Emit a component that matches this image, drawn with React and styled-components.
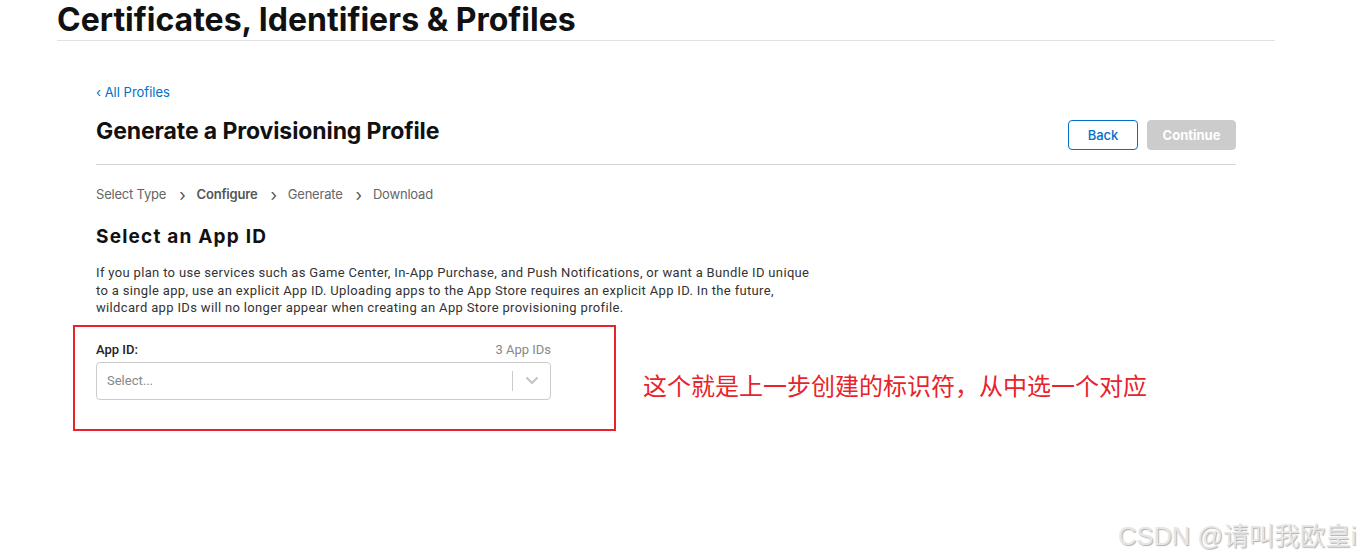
import React from "react";
import styled, { createGlobalStyle } from "styled-components";

const GlobalStyle = createGlobalStyle`
  html, body {
    margin: 0;
    padding: 0;
    background: #fff;
  }
  body {
    font-family: Inter, "Noto Sans", sans-serif;
    color: #111;
    width: 1361px;
    height: 559px;
    overflow: hidden;
  }
`;

const Page = styled.div`
  position: relative;
  width: 1361px;
  height: 559px;
`;

const Header = styled.header`
  margin-left: 57px;
  width: 1218px;
  border-bottom: 1px solid #e2e2e2;
  height: 40px;
  h1 {
    margin: 0;
    font-size: 32px;
    font-weight: 700;
    line-height: 40px;
    color: #111;
  }
`;

const Content = styled.main`
  margin-left: 96px;
  width: 1140px;
  padding-top: 43px;
`;

const BackLink = styled.a`
  display: block;
  color: #0070c9;
  font-size: 13px;
  line-height: 16px;
  text-decoration: none;
  font-family: Inter, sans-serif;
`;

const TitleRow = styled.div`
  display: flex;
  justify-content: space-between;
  align-items: flex-end;
  margin-top: 17px;
  padding-bottom: 14px;
  border-bottom: 1px solid #d6d6d6;
  h2 {
    margin: 0 0 5px;
    font-size: 23px;
    font-weight: 700;
    line-height: 28px;
    letter-spacing: -0.1px;
    color: #111;
  }
`;

const Buttons = styled.div`
  display: flex;
  gap: 9px;
`;

const Button = styled.button`
  height: 30px;
  border-radius: 4px;
  font-family: Inter, sans-serif;
  font-size: 13px;
  padding: 0;
  width: ${(p) => (p.$primary ? "89px" : "70px")};
  border: 1px solid ${(p) => (p.$primary ? "#cccccc" : "#0070c9")};
  background: ${(p) => (p.$primary ? "#cccccc" : "#fff")};
  color: ${(p) => (p.$primary ? "#fff" : "#0070c9")};
  font-weight: ${(p) => (p.$primary ? 700 : 500)};
`;

const Steps = styled.ol`
  display: flex;
  align-items: center;
  list-style: none;
  margin: 19px 0 0;
  padding: 0;
  font-family: Inter, sans-serif;
  font-size: 13px;
  line-height: 18px;
  color: #666;
`;

const Step = styled.li`
  display: flex;
  align-items: center;
  font-weight: ${(p) => (p.$active ? 600 : 400)};
  color: ${(p) => (p.$active ? "#555" : "#666")};
  letter-spacing: -0.2px;
  &:not(:last-child)::after {
    content: "›";
    font-weight: 400;
    font-size: 17px;
    margin: 2px 11px 0 13px;
    color: #555;
  }
`;

const Section = styled.section`
  margin-top: 21px;
  h3 {
    margin: 0;
    font-family: Inter, sans-serif;
    font-size: 19px;
    font-weight: 700;
    line-height: 24px;
    letter-spacing: 1.2px;
    color: #111;
  }
  p {
    margin: 15px 0 0;
    width: 716px;
    font-family: Roboto, sans-serif;
    font-size: 13px;
    line-height: 17.5px;
    letter-spacing: 0.34px;
    color: #333;
  }
`;

const Annotated = styled.div`
  display: flex;
  align-items: center;
  margin: 8px 0 0 -23px;
`;

const RedBox = styled.div`
  width: 518px;
  height: 77px;
  border: 2px solid #e8232b;
  padding: 15px 0 10px 21px;
`;

const FieldHead = styled.div`
  display: flex;
  justify-content: space-between;
  width: 455px;
  font-family: Roboto, sans-serif;
  font-size: 13px;
  line-height: 16px;
  label {
    color: #222;
    font-weight: 500;
  }
  span {
    color: #888;
  }
`;

const SelectBox = styled.div`
  margin-top: 4px;
  width: 453px;
  height: 36px;
  border: 1px solid #ccc;
  border-radius: 4px;
  display: flex;
  align-items: center;
  font-family: Roboto, sans-serif;
  font-size: 13px;
  color: #888;
`;

const Placeholder = styled.span`
  flex: 1;
  padding-left: 10px;
`;

const Sep = styled.span`
  width: 1px;
  height: 20px;
  background: #ccc;
`;

const Chevron = styled.span`
  width: 37px;
  display: flex;
  justify-content: center;
  align-items: center;
`;

const Note = styled.div`
  margin-left: 27px;
  margin-top: 14px;
  font-family: "Microsoft YaHei", "Noto Sans CJK SC", sans-serif;
  font-size: 24px;
  color: #e8232b;
  white-space: nowrap;
`;

const Watermark = styled.div`
  position: absolute;
  left: 1118px;
  top: 515px;
  font-family: "Liberation Sans", "Noto Sans CJK SC", sans-serif;
  font-size: 25.5px;
  color: #e6e6e6;
  text-shadow: 1px 1px 1px #b0b0b0;
  white-space: nowrap;
`;

export default function App() {
  return (
    <Page>
      <GlobalStyle />
      <Header>
        <h1>Certificates, Identifiers &amp; Profiles</h1>
      </Header>
      <Content>
        <BackLink href="#">‹ All Profiles</BackLink>
        <TitleRow>
          <h2>Generate a Provisioning Profile</h2>
          <Buttons>
            <Button>Back</Button>
            <Button $primary>Continue</Button>
          </Buttons>
        </TitleRow>
        <Steps>
          <Step>Select Type</Step>
          <Step $active>Configure</Step>
          <Step>Generate</Step>
          <Step>Download</Step>
        </Steps>
        <Section>
          <h3>Select an App ID</h3>
          <p>
            If you plan to use services such as Game Center, In-App Purchase, and Push
            Notifications, or want a Bundle ID unique to a single app, use an explicit App ID.
            Uploading apps to the App Store requires an explicit App ID. In the future, wildcard
            app IDs will no longer appear when creating an App Store provisioning profile.
          </p>
          <Annotated>
            <RedBox>
              <FieldHead>
                <label>App ID:</label>
                <span>3 App IDs</span>
              </FieldHead>
              <SelectBox>
                <Placeholder>Select...</Placeholder>
                <Sep />
                <Chevron>
                  <svg width="14" height="9" viewBox="0 0 14 9">
                    <path d="M1.5 1.5 L7 7 L12.5 1.5" fill="none" stroke="#c4c4c4" strokeWidth="2" />
                  </svg>
                </Chevron>
              </SelectBox>
            </RedBox>
            <Note>这个就是上一步创建的标识符，从中选一个对应</Note>
          </Annotated>
        </Section>
      </Content>
      <Watermark>CSDN @请叫我欧皇i</Watermark>
    </Page>
  );
}
